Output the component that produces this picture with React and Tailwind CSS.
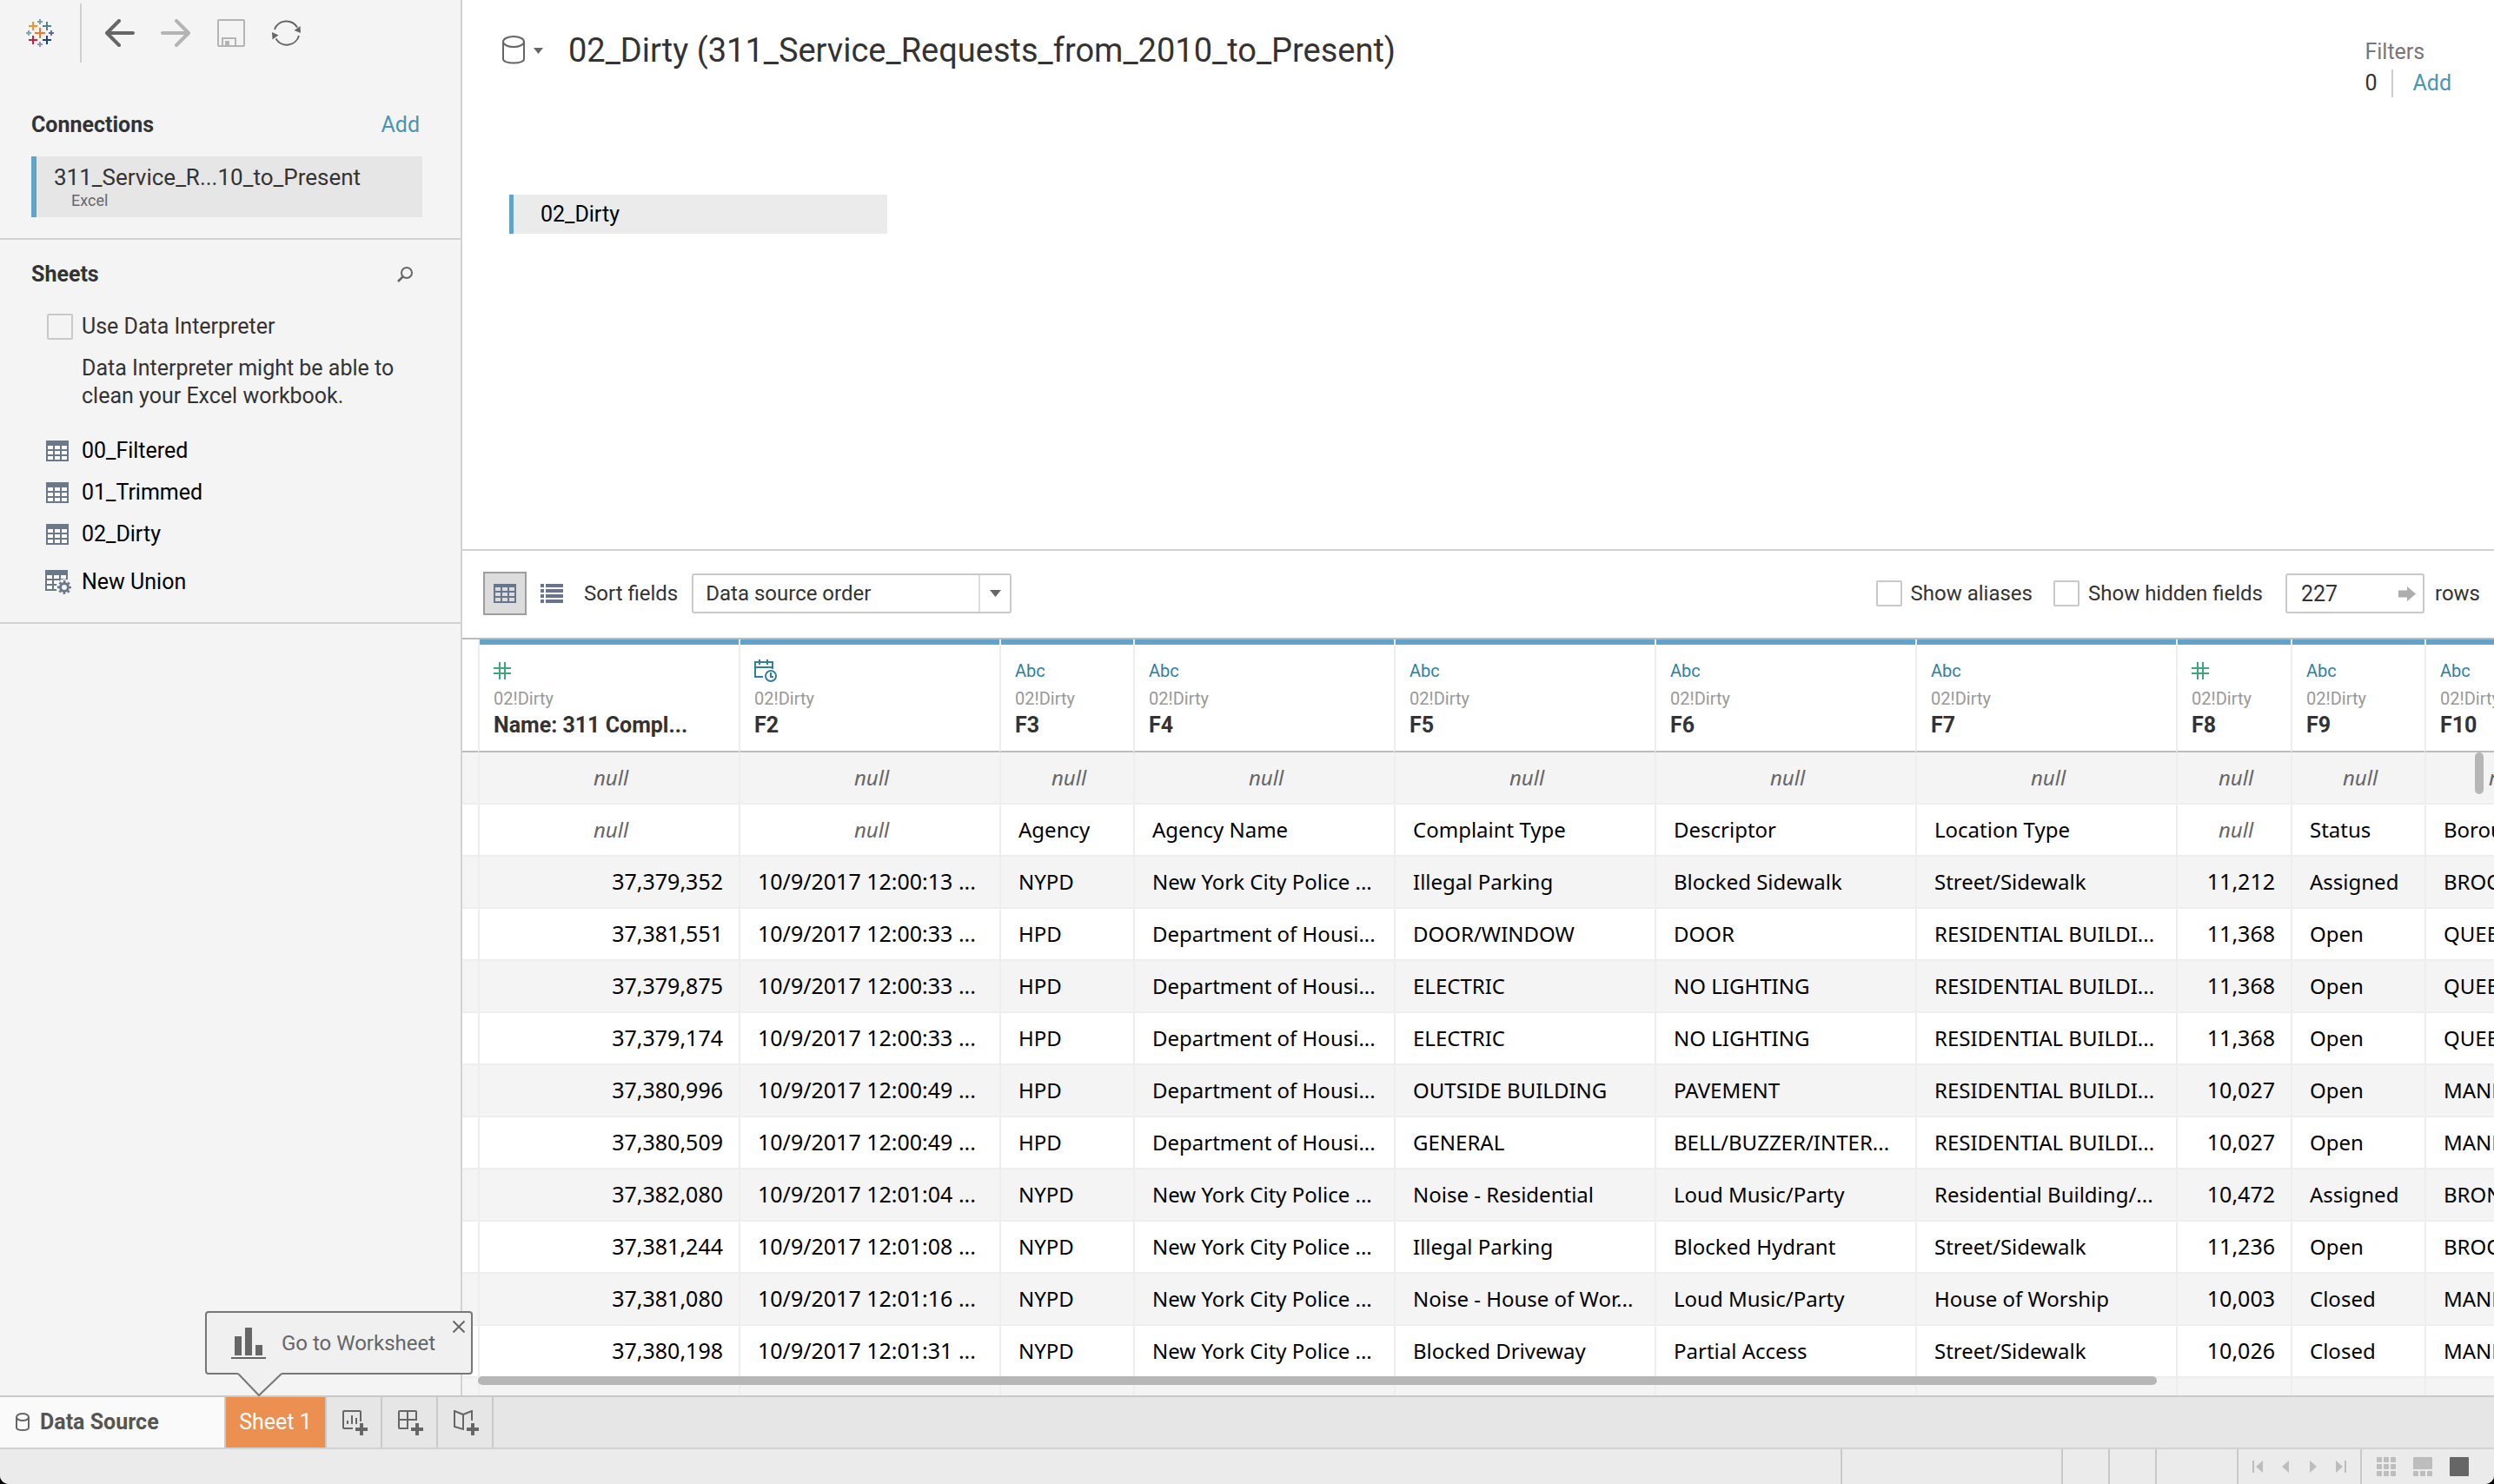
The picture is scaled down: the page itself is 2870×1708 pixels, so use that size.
const COLUMNS = [
  { name: "Name: 311 Compl...", type: "number" },
  { name: "F2", type: "datetime" },
  { name: "F3", type: "string" },
  { name: "F4", type: "string" },
  { name: "F5", type: "string" },
  { name: "F6", type: "string" },
  { name: "F7", type: "string" },
  { name: "F8", type: "number" },
  { name: "F9", type: "string" },
  { name: "F10", type: "string" },
];

const NYPD = "New York City Police ...";
const HPD = "Department of Housi...";
const RES = "RESIDENTIAL BUILDI...";

const ROWS = [
  [null, null, null, null, null, null, null, null, null, null],
  [null, null, "Agency", "Agency Name", "Complaint Type", "Descriptor", "Location Type", null, "Status", "Borough"],
  ["37,379,352", "10/9/2017 12:00:13 ...", "NYPD", NYPD, "Illegal Parking", "Blocked Sidewalk", "Street/Sidewalk", "11,212", "Assigned", "BROOKLYN"],
  ["37,381,551", "10/9/2017 12:00:33 ...", "HPD", HPD, "DOOR/WINDOW", "DOOR", RES, "11,368", "Open", "QUEENS"],
  ["37,379,875", "10/9/2017 12:00:33 ...", "HPD", HPD, "ELECTRIC", "NO LIGHTING", RES, "11,368", "Open", "QUEENS"],
  ["37,379,174", "10/9/2017 12:00:33 ...", "HPD", HPD, "ELECTRIC", "NO LIGHTING", RES, "11,368", "Open", "QUEENS"],
  ["37,380,996", "10/9/2017 12:00:49 ...", "HPD", HPD, "OUTSIDE BUILDING", "PAVEMENT", RES, "10,027", "Open", "MANHATTAN"],
  ["37,380,509", "10/9/2017 12:00:49 ...", "HPD", HPD, "GENERAL", "BELL/BUZZER/INTER...", RES, "10,027", "Open", "MANHATTAN"],
  ["37,382,080", "10/9/2017 12:01:04 ...", "NYPD", NYPD, "Noise - Residential", "Loud Music/Party", "Residential Building/...", "10,472", "Assigned", "BRONX"],
  ["37,381,244", "10/9/2017 12:01:08 ...", "NYPD", NYPD, "Illegal Parking", "Blocked Hydrant", "Street/Sidewalk", "11,236", "Open", "BROOKLYN"],
  ["37,381,080", "10/9/2017 12:01:16 ...", "NYPD", NYPD, "Noise - House of Wor...", "Loud Music/Party", "House of Worship", "10,003", "Closed", "MANHATTAN"],
  ["37,380,198", "10/9/2017 12:01:31 ...", "NYPD", NYPD, "Blocked Driveway", "Partial Access", "Street/Sidewalk", "10,026", "Closed", "MANHATTAN"],
  ["37,381,086", "10/9/2017 12:01:37 ...", "NYPD", NYPD, "Noise - Residential", "Loud Music/Party", "Residential Building/...", "10,026", "Closed", "MANHATTAN"],
];

function Plus({ x, y, r, color, w = 2 }) {
  return <path d={`M${x - r} ${y}H${x + r}M${x} ${y - r}V${y + r}`} stroke={color} strokeWidth={w} />;
}

function Logo() {
  return (
    <svg width="32" height="32" viewBox="0 0 32 32" fill="none" aria-label="Tableau" role="img">
      <Plus x={16} y={16} r={6} color="#eb7b2f" />
      <Plus x={8} y={8} r={5} color="#e8962e" />
      <Plus x={24} y={8} r={5} color="#4f8498" />
      <Plus x={8} y={24} r={5} color="#c8203f" />
      <Plus x={24} y={24} r={5} color="#1f4478" />
      <Plus x={16} y={3} r={3} color="#7aa0a8" />
      <Plus x={3} y={16} r={3} color="#7fa5b0" />
      <Plus x={29} y={16} r={3} color="#6a65a0" />
      <Plus x={16} y={29} r={3} color="#8f92ba" />
    </svg>
  );
}

function ArrowIcon({ forward }) {
  return (
    <svg width="34" height="32" viewBox="0 0 34 32" fill="none" stroke={forward ? "#b4b4b4" : "#666"} strokeWidth="4" strokeLinecap="round" strokeLinejoin="round">
      {forward ? <path d="M2 16H31M18 2L32 16L18 30" /> : <path d="M32 16H3M16 2L2 16L16 30" />}
    </svg>
  );
}

function SaveIcon() {
  return (
    <svg width="34" height="32" viewBox="0 0 34 32" fill="none" stroke="#b4b4b4" strokeWidth="2">
      <rect x="2" y="1" width="30" height="30" rx="1" />
      <path d="M7 31V22H22V31" />
      <rect x="10" y="25" width="5" height="6" fill="#b4b4b4" stroke="none" />
    </svg>
  );
}

function RefreshIcon() {
  return (
    <svg width="34" height="32" viewBox="0 0 34 32" fill="none" stroke="#666" strokeWidth="2">
      <path d="M3 12A14.500 14.500 0 0 1 29 9.500" />
      <path d="M31 19A14.500 14.500 0 0 1 4.500 22.500" />
      <path d="M25.500 13L32.500 8L33 16Z" fill="#666" stroke="none" />
      <path d="M0 15L0.500 23.500L7.500 18.500Z" fill="#666" stroke="none" />
    </svg>
  );
}

function SheetIcon() {
  return (
    <svg width="26" height="24" viewBox="0 0 26 24" shapeRendering="crispEdges">
      <rect width="26" height="24" fill="#6b788a" />
      {[6, 12, 18].map((y) => [2, 10, 18].map((x) => <rect key={`${x}-${y}`} x={x} y={y} width="6" height="4" fill="#fff" />))}
    </svg>
  );
}

function UnionIcon() {
  return (
    <svg width="30" height="28" viewBox="0 0 30 28">
      <rect width="26" height="24" fill="#6b788a" />
      {[6, 12, 18].map((y) => [2, 10, 18].map((x) => <rect key={`${x}-${y}`} x={x} y={y} width="6" height="4" fill="#fff" />))}
      <circle cx="22" cy="20" r="9.500" fill="#f4f4f4" />
      <circle cx="22" cy="20" r="4.500" fill="none" stroke="#6b788a" strokeWidth="3" />
      <circle cx="22" cy="20" r="6.700" fill="none" stroke="#6b788a" strokeWidth="2.600" strokeDasharray="2.630 2.630" strokeDashoffset="1.300" />
    </svg>
  );
}

function GridIcon() {
  return (
    <svg width="26" height="22" viewBox="0 0 26 22" shapeRendering="crispEdges">
      <rect width="26" height="22" fill="#68758a" />
      {[4, 10, 16].map((y) => [2, 10, 18].map((x) => <rect key={`${x}-${y}`} x={x} y={y} width="6" height="4" fill="#dcdcdc" />))}
    </svg>
  );
}

function ListIcon() {
  return (
    <svg width="26" height="22" viewBox="0 0 26 22" fill="#68758a" shapeRendering="crispEdges">
      {[0, 6, 12, 18].map((y) => (
        <g key={y}>
          <rect y={y} width="4" height="4" />
          <rect x="6" y={y} width="20" height="4" />
        </g>
      ))}
    </svg>
  );
}

function HashIcon() {
  return (
    <svg width="20" height="20" viewBox="0 0 20 20" fill="none" stroke="#3fa57f" strokeWidth="2">
      <path d="M7 0V20M13 0V20M0 7H20M0 13H20" />
    </svg>
  );
}

function DateIcon() {
  return (
    <svg width="26" height="26" viewBox="0 0 26 26" fill="none" stroke="#2f7fa0" strokeWidth="2">
      <path d="M21 11V3H1V20H10M1 9H21M6 0V6M15 0V6" />
      <circle cx="19" cy="19" r="6" />
      <path d="M19 15V20H22" />
    </svg>
  );
}

function Cylinder({ w, h, ry, color = "#666" }) {
  const r = w - 1;
  return (
    <svg width={w} height={h} viewBox={`0 0 ${w} ${h}`} fill="none" stroke={color} strokeWidth="2">
      <ellipse cx={w / 2} cy={ry + 1} rx={w / 2 - 1} ry={ry} />
      <path d={`M1 ${ry + 1}V${h - 1 - ry}C1 ${h - 1} ${r} ${h - 1} ${r} ${h - 1 - ry}V${ry + 1}`} />
    </svg>
  );
}

function Caret({ w, h }) {
  return (
    <svg width={w} height={h} viewBox="0 0 12 8" preserveAspectRatio="none" fill="#666">
      <path d="M0 0H12L6 8Z" />
    </svg>
  );
}

function AddPlus() {
  return <path d="M20 15H24V20H29V24H24V29H20V24H15V20H20Z" fill="#666" stroke="none" />;
}

function NewWorksheetIcon() {
  return (
    <svg width="30" height="30" viewBox="0 0 30 30" fill="none" stroke="#666" strokeWidth="2">
      <path d="M21 13V2C21 1.400 20.600 1 20 1H2C1.400 1 1 1.400 1 2V20C1 20.600 1.400 21 2 21H12M6 12V16M11 6V16M16 9V16" />
      <AddPlus />
    </svg>
  );
}

function NewDashboardIcon() {
  return (
    <svg width="30" height="30" viewBox="0 0 30 30" fill="none" stroke="#666" strokeWidth="2">
      <path d="M11 21H2C1.400 21 1 20.600 1 20V2C1 1.400 1.400 1 2 1H20C20.600 1 21 1.400 21 2V11H1M11 1V22" />
      <AddPlus />
    </svg>
  );
}

function NewStoryIcon() {
  return (
    <svg width="30" height="30" viewBox="0 0 30 30" fill="none" stroke="#666" strokeWidth="2">
      <path d="M11 5L1 1V19L11 22ZM11 5L21 1V12" />
      <AddPlus />
    </svg>
  );
}

function Checkbox({ id }) {
  return <input id={id} type="checkbox" className="h-[30px] w-[30px] shrink-0 appearance-none rounded-[2px] border-2 border-[#c9c9c9]" />;
}

function Sidebar() {
  return (
    <aside className="flex w-[532px] shrink-0 flex-col border-r-2 border-[#d2d2d2] bg-[#f4f4f4] text-[25px] leading-8 text-[#333]">
      <div className="flex h-[76px] items-center pl-[30px]">
        <Logo />
        <div className="ml-[30px] h-[68px] w-0.5 bg-[#d0d0d0]" />
        <div className="ml-[27px] flex gap-[30px]">
          <button aria-label="Back"><ArrowIcon /></button>
          <button aria-label="Forward"><ArrowIcon forward /></button>
          <button aria-label="Save"><SaveIcon /></button>
          <button aria-label="Refresh"><RefreshIcon /></button>
        </div>
      </div>

      <section className="border-b-2 border-[#d2d2d2] pt-[52px] pr-11 pb-6 pl-9">
        <div className="flex items-center justify-between">
          <h2 className="font-bold">Connections</h2>
          <button className="pr-[3px] text-[25px] leading-8 text-[#4896b5]">Add</button>
        </div>
        <button className="mt-5 block h-[70px] w-full border-l-[6px] border-[#62a4c7] bg-[#e6e6e6] pl-5 text-left">
          <span className="block pt-px text-[26px] leading-[30px]">311_Service_R...10_to_Present</span>
          <span className="block pl-5 text-[18px] leading-6 text-[#666]">Excel</span>
        </button>
      </section>

      <section className="border-b-2 border-[#d2d2d2] pt-6 pr-11 pb-[22px] pl-9">
        <div className="flex items-center justify-between">
          <h2 className="font-bold">Sheets</h2>
          <button aria-label="Search sheets" className="flex w-10 justify-center">
            <svg width="18" height="18" viewBox="0 0 18 18" fill="none" stroke="#666" strokeWidth="2">
              <circle cx="11" cy="7" r="6" />
              <path d="M7 11L1 17" strokeWidth="2.500" />
            </svg>
          </button>
        </div>
        <div className="mt-7 ml-[18px] flex items-center gap-[10px]">
          <Checkbox id="interpreter" />
          <label htmlFor="interpreter">Use Data Interpreter</label>
        </div>
        <p className="mt-4 ml-[58px]">
          Data Interpreter might be able to
          <br />
          clean your Excel workbook.
        </p>
        <ul className="mt-[23px] ml-[17px] text-black">
          {["00_Filtered", "01_Trimmed", "02_Dirty"].map((sheet) => (
            <li key={sheet}>
              <button className="flex h-12 items-center gap-[15px]">
                <SheetIcon />
                {sheet}
              </button>
            </li>
          ))}
        </ul>
        <button className="mt-[7px] ml-4 flex h-12 items-center gap-3 text-black">
          <UnionIcon />
          New Union
        </button>
      </section>
    </aside>
  );
}

function Canvas() {
  return (
    <section className="h-[634px] shrink-0 border-b-2 border-[#d2d2d2]">
      <div className="flex items-start justify-between pt-10 pr-[49px] pl-[46px]">
        <div className="flex h-9 items-center">
          <button aria-label="Data source menu" className="flex items-center gap-[10px]">
            <Cylinder w={26} h={34} ry={6} />
            <Caret w={11} h={7} />
          </button>
          <h1 className="ml-[29px] text-[38px] leading-9 text-[#333]">02_Dirty (311_Service_Requests_from_2010_to_Present)</h1>
        </div>
        <div className="pt-0.5 text-[25px] leading-9">
          <div className="text-[#777]">Filters</div>
          <div className="flex items-center">
            <span className="text-[#333]">0</span>
            <span className="ml-[17px] h-8 w-0.5 bg-[#ccc]" />
            <button className="ml-[22px] text-[#4896b5]">Add</button>
          </div>
        </div>
      </div>
      <button className="mt-[110px] ml-[54px] block h-[45px] w-[435px] border-l-[5px] border-[#62a4c7] bg-[#ebebeb] pl-[31px] text-left text-[25px] text-black">
        02_Dirty
      </button>
    </section>
  );
}

function GridToolbar() {
  return (
    <div className="flex h-[100px] shrink-0 items-center pr-4 pb-0.5 pl-6 text-2xl text-[#333]">
      <button aria-label="Preview data source" className="flex h-[50px] w-[50px] items-center justify-center border-2 border-[#9e9e9e] bg-[#dcdcdc]">
        <GridIcon />
      </button>
      <button aria-label="Manage metadata" className="ml-4"><ListIcon /></button>
      <label htmlFor="sort" className="ml-6">Sort fields</label>
      <div className="relative ml-4 w-[368px]">
        <select id="sort" className="block h-[46px] w-full appearance-none rounded-[3px] border-2 border-[#c9c9c9] bg-white pl-[14px]">
          <option>Data source order</option>
        </select>
        <span className="pointer-events-none absolute inset-y-0.5 right-0.5 flex w-9 items-center justify-center border-l-2 border-[#ddd]">
          <Caret w={13} h={8} />
        </span>
      </div>
      <div className="ml-auto flex items-center">
        <Checkbox id="aliases" />
        <label htmlFor="aliases" className="ml-[10px]">Show aliases</label>
        <div className="ml-6 flex items-center">
          <Checkbox id="hidden-fields" />
          <label htmlFor="hidden-fields" className="ml-[10px]">Show hidden fields</label>
        </div>
        <div className="relative ml-[26px]">
          <input id="rows" defaultValue="227" className="block h-[46px] w-40 rounded-[3px] border-2 border-[#c9c9c9] pl-4 text-[25px]" />
          <svg className="absolute top-[15px] right-[10px]" width="20" height="17" viewBox="0 0 20 17" fill="#adadad">
            <path d="M0 4.500H10V0L20 8.500L10 17V12.500H0Z" />
          </svg>
        </div>
        <label htmlFor="rows" className="ml-3">rows</label>
      </div>
    </div>
  );
}

function TypeIcon({ type }) {
  if (type === "number") return <HashIcon />;
  if (type === "datetime") return <DateIcon />;
  return <span className="text-xl text-[#2f7fa0]">Abc</span>;
}

function DataGrid() {
  return (
    <div className="relative min-h-0 flex-1 overflow-hidden border-t-2 border-[#bbb]">
      <table className="w-[2440px] table-fixed border-separate border-spacing-0">
        <colgroup>
          <col className="w-[18px]" />
          <col className="w-[300px]" />
          <col className="w-[300px]" />
          <col className="w-[154px]" />
          <col className="w-[300px]" />
          <col className="w-[300px]" />
          <col className="w-[300px]" />
          <col className="w-[300px]" />
          <col className="w-[132px]" />
          <col className="w-[154px]" />
          <col className="w-[182px]" />
        </colgroup>
        <thead>
          <tr>
            <td className="border-b-2 border-[#bbb]" />
            {COLUMNS.map((c) => (
              <th key={c.name} scope="col" className="h-[130px] border-b-2 border-l-2 border-b-[#bbb] border-l-[#eee] p-0 text-left align-top">
                <div className="h-1.5 bg-[#62a4c7]" />
                <div className="pt-[13px] pl-4 font-normal">
                  <div className="flex h-[34px] items-center"><TypeIcon type={c.type} /></div>
                  <div className="text-xl leading-[30px] text-[#999]">02!Dirty</div>
                  <div className="text-[25px] leading-8 font-bold text-[#333]">{c.name}</div>
                </div>
              </th>
            ))}
          </tr>
        </thead>
        <tbody className="font-['Noto_Sans',sans-serif] text-2xl whitespace-nowrap text-black">
          {ROWS.map((row, i) => (
            <tr key={i} className="odd:bg-[#f4f4f4]">
              <td className="h-[60px] border-b-2 border-[#eee] p-0" />
              {row.map((value, j) =>
                value === null ? (
                  <td key={j} className="h-[60px] border-b-2 border-l-2 border-[#eee] py-0 pr-0 pl-1 text-center text-[#666] italic">null</td>
                ) : COLUMNS[j].type === "number" ? (
                  <td key={j} className="h-[60px] border-b-2 border-l-2 border-[#eee] py-0 pr-[18px] pl-0 text-right text-[25px]">{value}</td>
                ) : COLUMNS[j].type === "datetime" ? (
                  <td key={j} className="h-[60px] border-b-2 border-l-2 border-[#eee] py-0 pr-0 pl-5 text-[25px]">{value}</td>
                ) : (
                  <td key={j} className="h-[60px] overflow-hidden border-b-2 border-l-2 border-[#eee] py-0 pr-0 pl-5">{value}</td>
                )
              )}
            </tr>
          ))}
        </tbody>
      </table>
      <div className="absolute top-[130px] right-3 h-12 w-[10px] rounded-full bg-[#b6b6b6]" />
      <div className="absolute right-[388px] bottom-3 left-[18px] h-[10px] rounded-full bg-[#b6b6b6]" />
    </div>
  );
}

function WorksheetTip() {
  return (
    <div className="absolute bottom-full -left-6 z-10 w-[308px] text-[#666]">
      <div className="flex h-[73px] items-center rounded-[4px] border-2 border-[#777] bg-[#f0f0f0] pl-7">
        <svg width="40" height="36" viewBox="0 0 40 36" fill="#666" shapeRendering="crispEdges">
          <rect x="4" y="10" width="8" height="22" />
          <rect x="16" width="8" height="32" />
          <rect x="28" y="20" width="8" height="12" />
          <rect y="34" width="40" height="2" />
        </svg>
        <button className="ml-[18px] text-2xl leading-8">Go to Worksheet</button>
        <button aria-label="Close" className="absolute top-[11px] right-[9px]">
          <svg width="14" height="14" viewBox="0 0 14 14" fill="none" stroke="#666" strokeWidth="2"><path d="M0.500 0.500L13.500 13.500M13.500 0.500L0.500 13.500" /></svg>
        </button>
      </div>
      <svg className="-mt-0.5 ml-[37px] block" width="52" height="28" viewBox="0 0 52 28" fill="#f0f0f0">
        <rect x="1" width="50" height="2" />
        <path d="M1 1L25 26L51 1" stroke="#777" strokeWidth="2" />
      </svg>
    </div>
  );
}

function TabBar() {
  return (
    <nav className="flex h-[62px] shrink-0 border-y-2 border-t-[#c9c9c9] border-b-[#d2d2d2] bg-[#e6e6e6] text-[25px]">
      <button className="flex w-[260px] items-center gap-3 border-r-2 border-[#c9c9c9] bg-[#fafafa] pl-[18px] font-bold text-[#555]">
        <Cylinder w={16} h={22} ry={4} />
        Data Source
      </button>
      <div className="relative flex">
        <button className="w-[116px] border-r-2 border-[#c9c9c9] bg-[#eb9050] text-white">Sheet 1</button>
        <WorksheetTip />
      </div>
      <button aria-label="New worksheet" className="flex w-16 items-center border-r-2 border-[#c9c9c9] pt-0.5 pl-[18px]"><NewWorksheetIcon /></button>
      <button aria-label="New dashboard" className="flex w-16 items-center border-r-2 border-[#c9c9c9] pt-0.5 pl-[18px]"><NewDashboardIcon /></button>
      <button aria-label="New story" className="flex w-16 items-center border-r-2 border-[#c9c9c9] pt-0.5 pl-[18px]"><NewStoryIcon /></button>
    </nav>
  );
}

function NavIcon({ d }) {
  return <svg width="12" height="14" viewBox="0 0 12 14" fill="#bdbdbd"><path d={d} /></svg>;
}

function StatusBar() {
  return (
    <footer className="flex h-10 shrink-0 justify-end bg-[#ebebeb]">
      <div className="w-[254px] border-l-2 border-[#c9c9c9]" />
      <div className="w-[54px] border-l-2 border-[#c9c9c9]" />
      <div className="w-[54px] border-l-2 border-[#c9c9c9]" />
      <div className="w-[94px] border-l-2 border-[#c9c9c9]" />
      <div className="flex w-[142px] items-center gap-5 border-l-2 border-[#c9c9c9] pl-4">
        <button aria-label="First sheet"><NavIcon d="M0 0H2V14H0ZM12 0V14L4 7Z" /></button>
        <button aria-label="Previous sheet"><NavIcon d="M10 0V14L2 7Z" /></button>
        <button aria-label="Next sheet"><NavIcon d="M2 0V14L10 7Z" /></button>
        <button aria-label="Last sheet"><NavIcon d="M0 0V14L8 7ZM10 0H12V14H10Z" /></button>
      </div>
      <div className="flex w-[154px] items-center gap-5 border-l-2 border-[#c9c9c9] pl-[17px]">
        <button aria-label="Show sheet sorter">
          <svg width="22" height="22" viewBox="0 0 22 22" fill="#bdbdbd">
            {[0, 8, 16].map((y) => [0, 8, 16].map((x) => <rect key={`${x}-${y}`} x={x} y={y} width="6" height="6" rx="1" />))}
          </svg>
        </button>
        <button aria-label="Show filmstrip">
          <svg width="22" height="22" viewBox="0 0 22 22" fill="#bdbdbd">
            <rect width="22" height="14" rx="1" />
            {[0, 8, 16].map((x) => <rect key={x} x={x} y="16" width="6" height="6" rx="1" />)}
          </svg>
        </button>
        <button aria-label="Show tabs">
          <svg width="22" height="22" viewBox="0 0 22 22"><rect width="22" height="22" rx="1" fill="#666" /></svg>
        </button>
      </div>
    </footer>
  );
}

export default function App() {
  return (
    <div className="h-screen bg-black font-[Roboto,sans-serif] [&_svg]:block">
      <div className="flex h-full flex-col overflow-hidden rounded-b-[10px] bg-white">
        <div className="flex min-h-0 flex-1">
          <Sidebar />
          <main className="flex min-w-0 flex-1 flex-col">
            <Canvas />
            <GridToolbar />
            <DataGrid />
          </main>
        </div>
        <TabBar />
        <StatusBar />
      </div>
    </div>
  );
}
